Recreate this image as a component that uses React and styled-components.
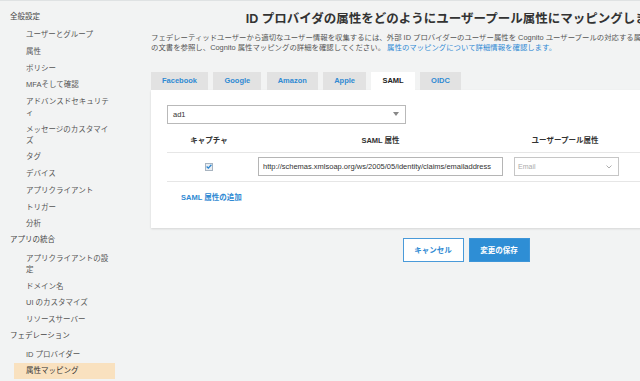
import React from "react";
import styled, { createGlobalStyle } from "styled-components";

const GlobalStyle = createGlobalStyle`
  html, body {
    margin: 0;
    padding: 0;
  }
  body {
    background: #f2f3f3;
    font-family: "Liberation Sans", "Noto Sans CJK JP", sans-serif;
    color: #444;
    overflow: hidden;
  }
`;

const navGroups = [
  {
    title: "全般設定",
    items: [
      "ユーザーとグループ",
      "属性",
      "ポリシー",
      "MFAそして確認",
      "アドバンスドセキュリティ",
      "メッセージのカスタマイズ",
      "タグ",
      "デバイス",
      "アプリクライアント",
      "トリガー",
      "分析",
    ],
  },
  {
    title: "アプリの統合",
    items: ["アプリクライアントの設定", "ドメイン名", "UI のカスタマイズ", "リソースサーバー"],
  },
  {
    title: "フェデレーション",
    items: ["ID プロバイダー", "属性マッピング"],
  },
];

const tabs = ["Facebook", "Google", "Amazon", "Apple", "SAML", "OIDC"];

export default function App() {
  return (
    <>
      <GlobalStyle />
      <Page>
        <Sidebar>
          {navGroups.map((group) => (
            <div key={group.title}>
              <GroupTitle>{group.title}</GroupTitle>
              {group.items.map((item) => (
                <NavItem key={item} $active={item === "属性マッピング"}>
                  {item}
                </NavItem>
              ))}
            </div>
          ))}
        </Sidebar>

        <Main>
          <Title>ID プロバイダの属性をどのようにユーザープール属性にマッピングしますか?</Title>
          <Description>
            フェデレーティッドユーザーから適切なユーザー情報を収集するには、外部 ID
            プロバイダーのユーザー属性を Cognito ユーザープールの対応する属性にマッピングします。詳細は
            <br />
            の文書を参照し、Cognito 属性マッピングの詳細を確認してください。{" "}
            <Link>属性のマッピングについて詳細情報を確認します。</Link>
          </Description>

          <TabBar>
            {tabs.map((t) => (
              <Tab key={t} $active={t === "SAML"}>
                {t}
              </Tab>
            ))}
          </TabBar>

          <Panel>
            <ProviderSelect>
              <span>ad1</span>
              <svg width="6" height="4" viewBox="0 0 6 4">
                <path d="M0 0 L6 0 L3 4 Z" fill="#888" />
              </svg>
            </ProviderSelect>

            <GridRow $h={24}>
              <HeaderCell>キャプチャ</HeaderCell>
              <HeaderCell>SAML 属性</HeaderCell>
              <HeaderCell>ユーザープール属性</HeaderCell>
              <span />
            </GridRow>

            <GridRow $h={29}>
              <CheckCell>
                <Checkbox>
                  <svg width="6" height="5" viewBox="0 0 6 5">
                    <path d="M0.6 2.6 L2.3 4.1 L5.4 0.8" fill="none" stroke="#2b85d0" strokeWidth="1.3" />
                  </svg>
                </Checkbox>
              </CheckCell>
              <TextInput readOnly value="http://schemas.xmlsoap.org/ws/2005/05/identity/claims/emailaddress" />
              <AttrSelect>
                <span>Email</span>
                <svg width="6" height="4" viewBox="0 0 6 4">
                  <path d="M0.5 0.5 L3 3 L5.5 0.5" fill="none" stroke="#999" strokeWidth="0.8" />
                </svg>
              </AttrSelect>
              <span />
            </GridRow>

            <AddLink>SAML 属性の追加</AddLink>
          </Panel>

          <Actions>
            <Button>キャンセル</Button>
            <Button $primary>変更の保存</Button>
          </Actions>
        </Main>
      </Page>
    </>
  );
}

const Page = styled.div`
  display: flex;
  min-height: 381px;
  box-sizing: border-box;
  border-top: 1px solid #dfe2e3;
`;

const Sidebar = styled.nav`
  width: 151px;
  flex-shrink: 0;
  padding-top: 7.5px;
  box-sizing: border-box;
`;

const GroupTitle = styled.div`
  margin: 2px 0 5px;
  padding-left: 10px;
  font-size: 7.5px;
  line-height: 11px;
  color: #444;
`;

const NavItem = styled.div`
  width: 101px;
  margin-left: 14px;
  box-sizing: border-box;
  padding: 2.85px 3px 2.85px 12px;
  font-size: 7.5px;
  line-height: 11px;
  color: ${(p) => (p.$active ? "#333" : "#555")};
  background: ${(p) => (p.$active ? "#f9e1bf" : "transparent")};
`;

const Main = styled.main`
  width: 624px;
  flex-shrink: 0;
  padding-top: 10px;
`;

const Title = styled.h1`
  margin: 0;
  font-size: 12.5px;
  line-height: 16px;
  font-weight: bold;
  color: #333;
  text-align: center;
  white-space: nowrap;
`;

const Description = styled.p`
  margin: 6.3px 0 0;
  font-size: 7.4px;
  line-height: 10px;
  color: #555;
`;

const Link = styled.a`
  color: #2f8ad3;
  cursor: pointer;
`;

const TabBar = styled.div`
  display: flex;
  gap: 5.4px;
  margin-top: 18.7px;
`;

const Tab = styled.div`
  height: 18px;
  padding: 0 11px;
  font-size: 7.5px;
  line-height: 18px;
  font-weight: bold;
  color: ${(p) => (p.$active ? "#222" : "#2f8ad3")};
  background: ${(p) => (p.$active ? "#fff" : "#e2e2e2")};
`;

const Panel = styled.section`
  background: #fff;
  padding: 15px 16px 24.5px;
  box-shadow: 0 1px 2px rgba(0, 0, 0, 0.12);
`;

const ProviderSelect = styled.div`
  display: flex;
  align-items: center;
  justify-content: space-between;
  width: 239px;
  height: 19px;
  box-sizing: border-box;
  padding: 0 6px 0 5px;
  border: 1px solid #b9b9b9;
  font-size: 7.5px;
  color: #333;
  margin-bottom: 5px;
`;

const GridRow = styled.div`
  display: grid;
  grid-template-columns: 84px 259px 110px 1fr;
  align-items: center;
  height: ${(p) => p.$h}px;
  box-sizing: border-box;
  border-bottom: 1px solid #e6e6e6;
`;

const HeaderCell = styled.div`
  text-align: center;
  font-size: 7.5px;
  line-height: 11px;
  font-weight: bold;
  color: #333;
`;

const CheckCell = styled.div`
  display: flex;
  justify-content: center;
`;

const Checkbox = styled.span`
  display: flex;
  align-items: center;
  justify-content: center;
  width: 8px;
  height: 8px;
  box-sizing: border-box;
  border: 1px solid #a8b4c0;
  background: #e9eef3;
`;

const TextInput = styled.input`
  margin: 0 7px;
  height: 19px;
  box-sizing: border-box;
  padding: 0 4px;
  border: 1px solid #b5b5b5;
  border-radius: 0;
  font-family: "Liberation Sans", sans-serif;
  font-size: 7.5px;
  color: #333;
  outline: none;
  min-width: 0;
`;

const AttrSelect = styled.div`
  display: flex;
  align-items: center;
  justify-content: space-between;
  margin-left: 4px;
  width: 105px;
  height: 19px;
  box-sizing: border-box;
  padding: 0 6px 0 3px;
  border: 1px solid #c6c6c6;
  font-size: 7px;
  color: #aaa;
`;

const AddLink = styled.a`
  display: block;
  margin-top: 10.5px;
  padding-left: 14px;
  font-size: 7.5px;
  line-height: 11px;
  font-weight: bold;
  color: #2f8ad3;
  cursor: pointer;
`;

const Actions = styled.div`
  display: flex;
  justify-content: center;
  gap: 5px;
  margin-top: 10px;
  padding-left: 6px;
`;

const Button = styled.button`
  width: 61px;
  height: 24px;
  border: 1px solid ${(p) => (p.$primary ? "#3d95d8" : "#4a9ad9")};
  background: ${(p) => (p.$primary ? "#2e8ed5" : "#fff")};
  color: ${(p) => (p.$primary ? "#fff" : "#2f8ad3")};
  font-family: "Liberation Sans", "Noto Sans CJK JP", sans-serif;
  font-size: 7.5px;
  font-weight: bold;
  cursor: pointer;
`;
